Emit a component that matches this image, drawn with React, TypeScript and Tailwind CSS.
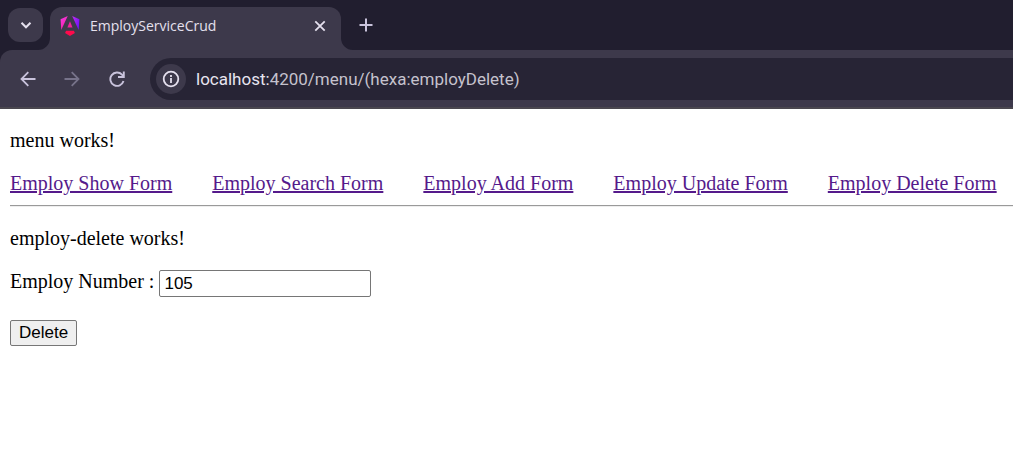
import { useState } from "react";

const links = [
  "Employ Show Form",
  "Employ Search Form",
  "Employ Add Form",
  "Employ Update Form",
  "Employ Delete Form",
];

function AngularLogo() {
  return (
    <svg viewBox="0 0 223 236" className="h-5 w-5 shrink-0" aria-hidden="true">
      <defs>
        <linearGradient id="warm" x1="0" y1="0.1" x2="0.5" y2="1">
          <stop offset="0" stopColor="#f637e3" />
          <stop offset="0.55" stopColor="#f52bc0" />
          <stop offset="1" stopColor="#f0219b" />
        </linearGradient>
        <linearGradient id="cool" x1="0" y1="0" x2="1" y2="0.6">
          <stop offset="0" stopColor="#c62cf0" />
          <stop offset="1" stopColor="#7213fa" />
        </linearGradient>
      </defs>
      <path fill="url(#cool)" d="m222.077 39.192-8.019 125.923L137.387 0l84.69 39.192Z" />
      <path fill="#ff0a4c" d="m168.972 202.017-57.933 33.056-57.934-33.056 11.783-28.556h92.301l11.783 28.556Z" />
      <path fill="#f0219b" d="m111.039 62.675 30.357 73.803H80.681l30.358-73.803Z" />
      <path fill="url(#warm)" d="M7.937 165.115 0 39.192 84.69 0 7.937 165.115Z" />
    </svg>
  );
}

function TabStrip() {
  return (
    <div className="flex h-[50px] items-end bg-[#211e2f] pl-2">
      <button
        type="button"
        aria-label="Search tabs"
        className="mb-2 flex h-[34px] w-[35px] shrink-0 items-center justify-center rounded-xl bg-[#3d394b] text-[#e5e0ee]"
      >
        <svg viewBox="0 0 12 12" className="h-3 w-3" fill="none" stroke="currentColor" strokeWidth="2" aria-hidden="true">
          <path d="M1.5 3.8 6 8.3l4.500-4.500" />
        </svg>
      </button>
      <div className="relative ml-[7px] flex h-[43px] w-[291px] items-center rounded-t-xl bg-[#3d394b] pr-[11px] pb-1.5 pl-2.5">
        <svg viewBox="0 0 12 12" className="absolute bottom-0 -left-3 h-3 w-3 fill-[#3d394b]" aria-hidden="true">
          <path d="M12 0v12H0A12 12 0 0 0 12 0Z" />
        </svg>
        <svg viewBox="0 0 12 12" className="absolute -right-3 bottom-0 h-3 w-3 fill-[#3d394b]" aria-hidden="true">
          <path d="M0 0v12h12A12 12 0 0 1 0 0Z" />
        </svg>
        <AngularLogo />
        <span className="ml-2.5 flex-1 text-[14px] leading-5 whitespace-nowrap text-[#e5e0ee]">EmployServiceCrud</span>
        <button type="button" aria-label="Close tab" className="flex h-5 w-5 items-center justify-center text-[#e5e0ee]">
          <svg viewBox="0 0 12 12" className="h-3 w-3" fill="none" stroke="currentColor" strokeWidth="1.8" aria-hidden="true">
            <path d="m1.300 1.300 9.400 9.400M10.700 1.300l-9.400 9.400" />
          </svg>
        </button>
      </div>
      <button type="button" aria-label="New tab" className="mb-4 ml-4 flex h-[18px] w-[18px] items-center justify-center text-[#c9c3dc]">
        <svg viewBox="0 0 14 14" className="h-3.5 w-3.5" fill="none" stroke="currentColor" strokeWidth="2" aria-hidden="true">
          <path d="M7 .5v13M.5 7h13" />
        </svg>
      </button>
    </div>
  );
}

function Toolbar() {
  return (
    <div className="bg-[#211e2f]">
      <div className="flex h-[59px] items-center rounded-tl-xl border-b-2 border-[#4a474f] bg-[#3d394b] pl-[18px]">
        <button type="button" aria-label="Back" className="flex h-5 w-5 items-center justify-center text-[#c9c3dc]">
          <svg viewBox="0 0 16 16" className="h-4 w-4" fill="none" stroke="currentColor" strokeWidth="1.8" aria-hidden="true">
            <path d="M15.500 8H2M8.300 1.200 1.500 8l6.800 6.800" />
          </svg>
        </button>
        <button type="button" disabled aria-label="Forward" className="ml-6 flex h-5 w-5 items-center justify-center text-[#77738a]">
          <svg viewBox="0 0 16 16" className="h-4 w-4" fill="none" stroke="currentColor" strokeWidth="1.8" aria-hidden="true">
            <path d="M.5 8H14M7.700 1.200 14.500 8l-6.800 6.800" />
          </svg>
        </button>
        <button type="button" aria-label="Reload" className="ml-[25px] flex h-5 w-5 items-center justify-center text-[#c9c3dc]">
          <svg viewBox="0 0 16 16" className="h-4 w-4" fill="none" stroke="currentColor" strokeWidth="1.9" aria-hidden="true">
            <path d="M14.500 10A6.700 6.700 0 1 1 13 3.600L14.500 5.500" />
            <path d="M14.800.5v5.500H9" />
          </svg>
        </button>
        <div className="ml-[23px] flex h-[42px] flex-1 items-center rounded-l-full bg-[#272435] pl-1.5">
          <button
            type="button"
            aria-label="View site information"
            className="flex h-[30px] w-[30px] shrink-0 items-center justify-center rounded-full bg-[#3d394b] text-[#e5e0ee]"
          >
            <svg viewBox="0 0 18 18" className="h-[18px] w-[18px]" fill="none" stroke="currentColor" strokeWidth="1.8" aria-hidden="true">
              <circle cx="9" cy="9" r="7.300" />
              <path d="M9 8v5M9 5v2" />
            </svg>
          </button>
          <span className="ml-2.5 pt-0.5 font-[Roboto,sans-serif] text-[17px] whitespace-nowrap text-[#c5c2cd]">
            <span className="text-[#e8e4f0]">localhost:</span>4200/menu/(hexa:employDelete)
          </span>
        </div>
      </div>
    </div>
  );
}

export default function App() {
  const [employNumber, setEmployNumber] = useState("105");

  return (
    <div className="min-h-screen overflow-x-hidden bg-white">
      <header className="font-['Open_Sans',sans-serif]">
        <TabStrip />
        <Toolbar />
      </header>
      <main className="pt-5 pl-2.5 font-['Liberation_Serif',serif] text-xl leading-[23px] text-black">
        <p>menu works!</p>
        <nav className="mt-5 flex gap-10 whitespace-nowrap">
          {links.map((link) => (
            <a key={link} href="#" className="text-[#551a8b] underline">
              {link}
            </a>
          ))}
        </nav>
        <hr className="mt-2.5 h-0.5 border-t border-b border-t-[#9a9a9a] border-b-[#eeeeee]" />
        <p className="mt-5">employ-delete works!</p>
        <form onSubmit={(event) => event.preventDefault()} className="mt-5">
          <div className="flex items-start gap-[5px]">
            <label htmlFor="employ-number">Employ Number :</label>
            <input
              id="employ-number"
              type="text"
              value={employNumber}
              onChange={(event) => setEmployNumber(event.target.value)}
              className="h-[27px] w-[212px] rounded-xs border border-[#767676] bg-white px-1 font-['Liberation_Sans',sans-serif] text-[17px]"
            />
          </div>
          <button
            type="submit"
            className="mt-[23px] block h-[26px] rounded-xs border border-[#767676] bg-[#efefef] px-2 font-['Liberation_Sans',sans-serif] text-[17px] leading-5"
          >
            Delete
          </button>
        </form>
      </main>
    </div>
  );
}
